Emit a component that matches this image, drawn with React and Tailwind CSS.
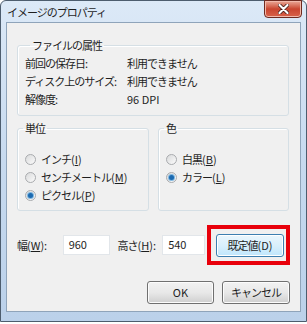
import React from "react";

const font = { fontFamily: '"Noto Sans CJK JP", "Noto Sans", sans-serif' };

// latin runs keep normal spacing, kana/kanji are set tight
const L = ({ children }) => <span className="tracking-[0px]">{children}</span>;

const Key = ({ k }) => (
  <L>
    (<span className="underline">{k}</span>)
  </L>
);

const Radio = ({ checked, children }) => (
  <div className="flex items-center h-[18px] pl-[7px]">
    <span className="w-[11px] h-[11px] rounded-full border border-[#a9abae] bg-gradient-to-br from-[#d9dadb] to-[#fbfbfb] flex items-center justify-center">
      {checked && (
        <span className="w-[5px] h-[5px] rounded-full bg-[#1d6ab0] ring-1 ring-[#7fb7e0]"></span>
      )}
    </span>
    <span className="ml-[5px] text-[#1e1e1e]">{children}</span>
  </div>
);

const Group = ({ title, className, children }) => (
  <fieldset
    className={`border border-[#d5dfe5] rounded-[3px] shadow-[inset_1px_1px_0_#fff] ${className}`}
  >
    <legend className="ml-[5px] px-[2px] leading-[14px] text-[#1e1e1e]">
      {title}
    </legend>
    {children}
  </fieldset>
);

const Button = ({ children, active, className }) => (
  <div
    className={`h-[23px] rounded-[3px] border flex items-center justify-center text-[#1e1e1e] ${
      active
        ? "border-[#3c7fb1] bg-gradient-to-b from-[#eaf6fd] via-[#d9f0fc] to-[#bee6fd] shadow-[inset_0_0_0_1px_#fff]"
        : "border-[#707070] bg-gradient-to-b from-[#f2f2f2] via-[#e8e8e8] to-[#cfcfcf] shadow-[inset_0_0_0_1px_#fcfcfc]"
    } ${className}`}
  >
    {children}
  </div>
);

export default function App() {
  return (
    <div
      className="w-[307px] h-[324px] bg-white text-[11px] tracking-[-1px]"
      style={font}
    >
      <div className="w-[307px] h-[322px] rounded-t-[6px] border border-[#4d5d6e] bg-gradient-to-b from-[#dce9f7] via-[#c7daef] to-[#bbd1ea] flex flex-col">
        {/* title bar */}
        <div className="h-[21px] flex items-start justify-between">
          <span className="mt-[4px] ml-[6px] text-[#1e1e1e] leading-[14px]">
            イメージのプロパティ
          </span>
          <div className="mr-[4px] -mt-[1px] w-[38px] h-[18px] rounded-b-[4px] border border-[#6e2a20] bg-gradient-to-b from-[#e9a898] via-[#c9452f] to-[#d8624a] flex items-center justify-center shadow-[inset_0_0_0_1px_#f1b9ab]">
            <svg width="11" height="10" viewBox="0 0 11 10">
              <path
                d="M1.5 1 L9.5 9 M9.5 1 L1.5 9"
                stroke="#3a1510"
                strokeWidth="3.6"
                strokeLinecap="round"
              />
              <path
                d="M1.5 1 L9.5 9 M9.5 1 L1.5 9"
                stroke="#ffffff"
                strokeWidth="2.2"
                strokeLinecap="round"
              />
            </svg>
          </div>
        </div>

        {/* client area */}
        <div className="ml-[5px] w-[295px] h-[290px] border border-[#8fa4ba] bg-[#f0f0f0] pt-[15px] pl-[10px] pr-[10px] flex flex-col">
          <Group title="ファイルの属性" className="w-[272px] h-[78px] pl-[7px]">
            <div className="flex flex-col mt-[2px]">
              {[
                ["前回の保存日:", "利用できません"],
                ["ディスク上のサイズ:", "利用できません"],
                ["解像度:", <L key="dpi">96 DPI</L>],
              ].map(([k, v]) => (
                <div key={k} className="flex items-center h-[18px]">
                  <span className="w-[102px] text-[#1e1e1e]">{k}</span>
                  <span className="text-[#1e1e1e]">{v}</span>
                </div>
              ))}
            </div>
          </Group>

          <div className="flex gap-[9px] mt-[5px]">
            <Group title="単位" className="w-[132px] h-[90px]">
              <div className="mt-[15px] flex flex-col">
                <Radio>
                  インチ<Key k="I" />
                </Radio>
                <Radio>
                  センチメートル<Key k="M" />
                </Radio>
                <Radio checked>
                  ピクセル<Key k="P" />
                </Radio>
              </div>
            </Group>
            <Group title="色" className="w-[131px] h-[90px]">
              <div className="mt-[15px] flex flex-col">
                <Radio>
                  白黒<Key k="B" />
                </Radio>
                <Radio checked>
                  カラー<Key k="L" />
                </Radio>
              </div>
            </Group>
          </div>

          <div className="flex items-center h-[40px] mt-[14px]">
            <span className="w-[47px] text-[#1e1e1e]">
              幅<Key k="W" />
              <L>:</L>
            </span>
            <div className="w-[49px] h-[20px] bg-white border border-[#e2e6ea] pl-[5px] leading-[16px] text-[#1e1e1e]">
              <L>960</L>
            </div>
            <span className="ml-[7px] w-[46px] text-[#1e1e1e]">
              高さ<Key k="H" />
              <L>:</L>
            </span>
            <div className="w-[44px] h-[20px] bg-white border border-[#e2e6ea] pl-[5px] leading-[16px] text-[#1e1e1e]">
              <L>540</L>
            </div>
            <div className="ml-[2px] w-[85px] h-[40px] border-[4px] border-[#e8000b] pl-[5px] pt-[5px]">
              <Button active className="w-[68px]">
                既定値<L>(D)</L>
              </Button>
            </div>
          </div>

          <div className="flex justify-end mt-[16px] gap-[8px]">
            <Button className="w-[67px]">
              <L>OK</L>
            </Button>
            <Button className="w-[68px]">キャンセル</Button>
          </div>
        </div>
      </div>
    </div>
  );
}
